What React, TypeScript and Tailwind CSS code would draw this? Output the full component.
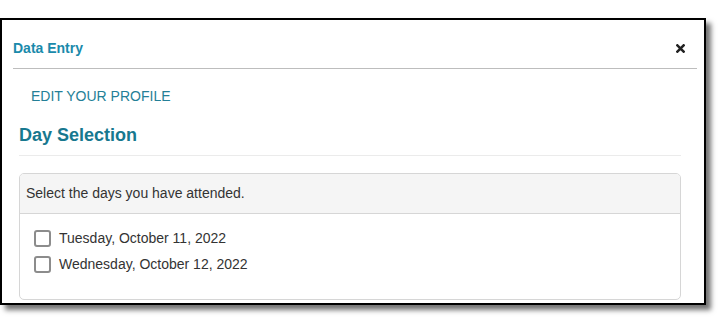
export default function App() {
	const days = ["Tuesday, October 11, 2022", "Wednesday, October 12, 2022"];

	return (
		<div className="w-[720px] h-[319px] bg-white pt-[18px] font-['Liberation_Sans',Arial,sans-serif]">
			<div className="w-[706px] h-[287px] border-2 border-black bg-white shadow-[5px_5px_5px_rgba(0,0,0,0.55)] flex flex-col">
				{/* modal header */}
				<div className="ml-[11px] mr-[7px] h-[49px] pt-[8px] flex items-center justify-between border-b border-[#bdbdbd]">
					<span className="text-[14px] font-bold text-[#1a8aab]">Data Entry</span>
					<span className="mr-[12px]">
						<svg width="9" height="9" viewBox="0 0 10 10">
							<path d="M1.5 1.5 L8.5 8.5 M8.5 1.5 L1.5 8.5" stroke="#222" strokeWidth="2.8" strokeLinecap="square" />
						</svg>
					</span>
				</div>

				<div className="ml-[17px] mr-[23px] flex flex-col">
					<div className="pl-[12px] pt-[19px] text-[14px] text-[#247f97] leading-[16px] uppercase">
						Edit your profile
					</div>
					<h2 className="mt-[20px] text-[18px] font-bold text-[#17788f] leading-[22px]">Day Selection</h2>
					<div className="mt-[9px] border-b border-[#ebebeb]" />

					<div className="mt-[17px] h-[127px] border border-[#d6d6d6] rounded-[5px] overflow-hidden flex flex-col">
						<div className="h-[40px] bg-[#f5f5f5] border-b border-[#d6d6d6] flex items-center px-[6px] text-[14px] text-[#333]">
							Select the days you have attended.
						</div>
						<div className="pt-[15px] pl-[14px] flex flex-col gap-[8px]">
							{days.map(d => (
								<label key={d} className="flex items-center gap-[8px] text-[14px] text-[#333] leading-[18px]">
									<span className="w-[17px] h-[17px] border-2 border-[#8c8c8c] rounded-[3px] bg-white" />
									{d}
								</label>
							))}
						</div>
					</div>
				</div>
			</div>
		</div>
	);
}
